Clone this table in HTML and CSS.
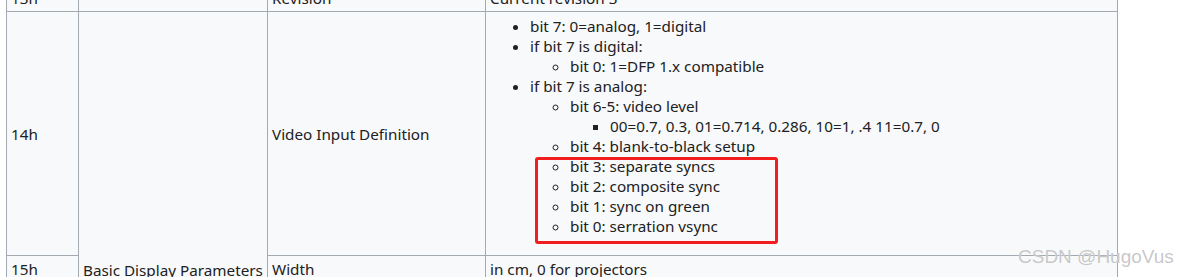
FILE: index.html
```html
<!DOCTYPE html>
<html lang="en">
<head>
<meta charset="utf-8">
<title>EDID</title>
<link rel="stylesheet" href="styles.css">
</head>
<body>
<div class="page">
  <table class="edid">
    <colgroup>
      <col class="c-off">
      <col class="c-grp">
      <col class="c-name">
      <col class="c-desc">
    </colgroup>
    <tbody>
      <tr>
        <td>13h</td>
        <td></td>
        <td>Revision</td>
        <td>Current revision 3</td>
      </tr>
      <tr>
        <td>14h</td>
        <td rowspan="5">Basic Display Parameters</td>
        <td>Video Input Definition</td>
        <td>
          <ul class="bits">
            <li>bit 7: 0=analog, 1=digital</li>
            <li>if bit 7 is digital:
              <ul>
                <li>bit 0: 1=DFP 1.x compatible</li>
              </ul>
            </li>
            <li>if bit 7 is analog:
              <ul>
                <li>bit 6-5: video level
                  <ul>
                    <li>00=0.7, 0.3, 01=0.714, 0.286, 10=1, .4 11=0.7, 0</li>
                  </ul>
                </li>
                <li>bit 4: blank-to-black setup</li>
                <li>bit 3: separate syncs</li>
                <li>bit 2: composite sync</li>
                <li>bit 1: sync on green</li>
                <li>bit 0: serration vsync</li>
              </ul>
            </li>
          </ul>
        </td>
      </tr>
      <tr>
        <td>15h</td>
        <td>Width</td>
        <td>in cm, 0 for projectors</td>
      </tr>
      <tr>
        <td>16h</td>
        <td>Height</td>
        <td>in cm, 0 for projectors</td>
      </tr>
      <tr>
        <td>17h</td>
        <td>Display Gamma</td>
        <td>(gamma*100)-100 = 1.0 ... 3.54</td>
      </tr>
      <tr>
        <td>18h</td>
        <td>Feature Support (DPMS)</td>
        <td class="tall">
          <ul class="bits">
            <li>bit 7: standby</li>
            <li>bit 6: suspend</li>
            <li>bit 5: active-off/low power</li>
            <li>bit 4-3: display type
              <ul>
                <li>00=monochrome, 01=RGB colour, 10=non RGB multicolour, 11=undefined</li>
              </ul>
            </li>
            <li>bit 2: standard colour space</li>
            <li>bit 1: preferred timing mode</li>
            <li>bit 0: default GTF supported</li>
          </ul>
        </td>
      </tr>
    </tbody>
  </table>
  <div class="highlight"></div>
  <div class="watermark">CSDN @HugoVus</div>
</div>
</body>
</html>
```
FILE: styles.css
```css
html, body {
  margin: 0;
  padding: 0;
  background: #ffffff;
}

.page {
  position: relative;
  width: 1190px;
  height: 277px;
  overflow: hidden;
  font-family: "Noto Sans", "Open Sans", sans-serif;
  font-size: 15.25px;
  line-height: 20px;
  color: #202122;
}

.edid {
  border-collapse: collapse;
  table-layout: fixed;
  width: 1111px;
  margin: -16px 0 0 6px;
  background: #f8f9fa;
}

.c-off { width: 72px; }
.c-grp { width: 189px; }
.c-name { width: 218px; }
.c-desc { width: 632px; }

.edid td {
  border: 1px solid #a2a9b1;
  padding: 3px 4px;
  vertical-align: middle;
  white-space: nowrap;
}

.edid td.tall {
  padding-bottom: 10px;
}

.bits {
  margin: 1px 0 16px 0;
  padding-left: 40px;
}

.bits ul {
  margin: 0;
  padding-left: 40px;
}

.highlight {
  position: absolute;
  left: 535px;
  top: 157px;
  width: 243px;
  height: 87px;
  box-sizing: border-box;
  border: 3px solid #f21d1d;
  border-radius: 3px;
}

.watermark {
  position: absolute;
  left: 1018px;
  top: 246px;
  font-family: "Liberation Sans", Arial, sans-serif;
  font-size: 19px;
  line-height: 22px;
  color: rgba(175, 175, 175, 0.7);
  text-shadow: 0 0 1px #ffffff;
  white-space: nowrap;
}
```
